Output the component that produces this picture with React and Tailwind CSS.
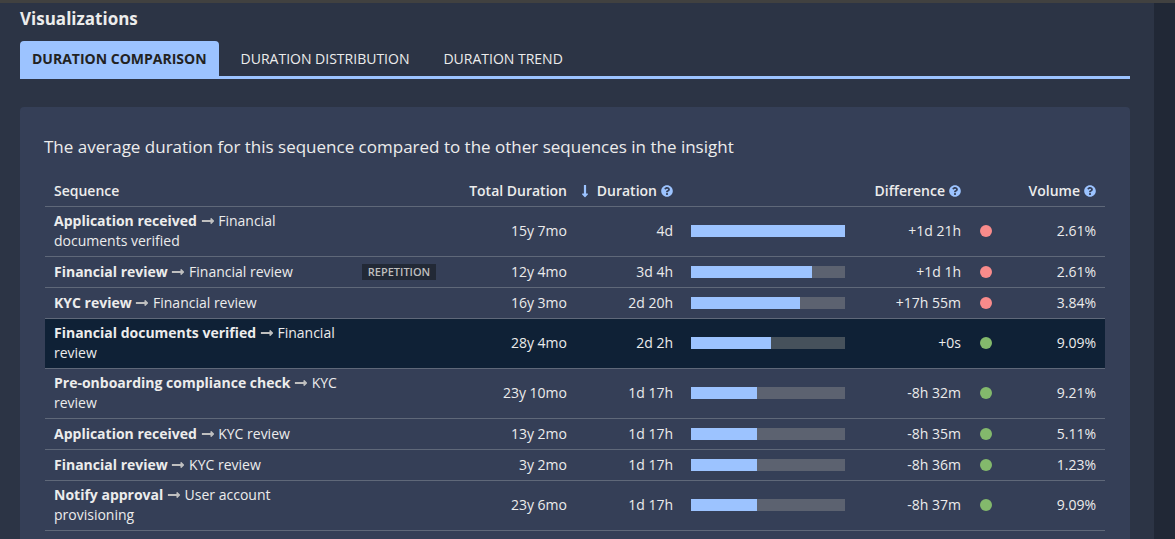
import { FaLongArrowAltDown, FaLongArrowAltRight, FaQuestionCircle } from "react-icons/fa";

const tabs = ["Duration comparison", "Duration distribution", "Duration trend"];

const rows = [
  { from: "Application received", to: "Financial documents verified", total: "15y 7mo", duration: "4d", share: 100, diff: "+1d 21h", slower: true, volume: "2.61%" },
  { from: "Financial review", to: "Financial review", repetition: true, total: "12y 4mo", duration: "3d 4h", share: 78.6, diff: "+1d 1h", slower: true, volume: "2.61%" },
  { from: "KYC review", to: "Financial review", total: "16y 3mo", duration: "2d 20h", share: 70.8, diff: "+17h 55m", slower: true, volume: "3.84%" },
  { from: "Financial documents verified", to: "Financial review", current: true, total: "28y 4mo", duration: "2d 2h", share: 52, diff: "+0s", volume: "9.09%" },
  { from: "Pre-onboarding compliance check", to: "KYC review", total: "23y 10mo", duration: "1d 17h", share: 43, diff: "-8h 32m", volume: "9.21%" },
  { from: "Application received", to: "KYC review", total: "13y 2mo", duration: "1d 17h", share: 43, diff: "-8h 35m", volume: "5.11%" },
  { from: "Financial review", to: "KYC review", total: "3y 2mo", duration: "1d 17h", share: 43, diff: "-8h 36m", volume: "1.23%" },
  { from: "Notify approval", to: "User account provisioning", total: "23y 6mo", duration: "1d 17h", share: 43, diff: "-8h 37m", volume: "9.09%" },
];

function Help({ topic }) {
  return (
    <button type="button" aria-label={`About ${topic}`} className="text-[#9cc3ff]">
      <FaQuestionCircle className="size-3" />
    </button>
  );
}

function Tabs() {
  return (
    <div role="tablist" className="flex gap-2.5 border-b-3 border-[#9cc3ff]">
      {tabs.map((tab, i) => (
        <button
          key={tab}
          type="button"
          role="tab"
          aria-selected={i === 0}
          className={`h-[35px] rounded-t px-3 text-sm uppercase ${
            i === 0 ? "bg-[#9cc3ff] font-bold text-[#222222]" : "text-[#ececec]"
          }`}
        >
          {tab}
        </button>
      ))}
    </div>
  );
}

function Row({ row }) {
  const cell = "h-[31px] px-[9px] pt-1 pb-[5px]";
  return (
    <tr className={`border-b border-[#5f6879] ${row.current ? "bg-[#0f2136]" : ""}`}>
      <td className={cell}>
        <strong className="font-bold">{row.from}</strong>{" "}
        <FaLongArrowAltRight className="inline size-3.5 align-[-2px] text-[#bfbfbf]" />{" "}
        {row.to}
      </td>
      <td className={`${cell} text-right`}>
        {row.repetition && (
          <span className="block bg-[#222936] text-center text-[11px] leading-4 font-semibold text-[#bfbfbf]">
            REPETITION
          </span>
        )}
      </td>
      <td className={`${cell} text-right`}>{row.total}</td>
      <td className={`${cell} text-right`}>{row.duration}</td>
      <td className={cell}>
        <div className={`h-3 ${row.current ? "bg-[#46515b]" : "bg-[#5c6270]"}`}>
          <div className="h-full bg-[#9cc3ff]" style={{ width: `${row.share}%` }} />
        </div>
      </td>
      <td className={`${cell} text-right`}>{row.diff}</td>
      <td className={cell}>
        <div className={`mx-auto size-3 rounded-full ${row.slower ? "bg-[#f98b8b]" : "bg-[#83b96c]"}`} />
      </td>
      <td className={`${cell} text-right`}>{row.volume}</td>
    </tr>
  );
}

function ComparisonTable() {
  const head = "px-[9px] pt-1.5 pb-[5px] font-semibold";
  return (
    <table className="w-full table-fixed border-collapse text-sm leading-5">
      <colgroup>
        <col />
        <col className="w-[92px]" />
        <col className="w-[131px]" />
        <col className="w-[106px]" />
        <col className="w-[172px]" />
        <col className="w-[116px]" />
        <col className="w-8" />
        <col className="w-[103px]" />
      </colgroup>
      <thead>
        <tr className="border-b border-[#5f6879]">
          <th scope="col" className={`${head} text-left`}>Sequence</th>
          <td />
          <th scope="col" className={`${head} text-right whitespace-nowrap`}>Total Duration</th>
          <th scope="col" aria-sort="descending" className={`${head} pl-0`}>
            <div className="flex items-center justify-end gap-1">
              <FaLongArrowAltDown className="mr-1 h-3.5 w-2 text-[#9cc3ff]" />
              Duration
              <Help topic="duration" />
            </div>
          </th>
          <td />
          <th scope="col" className={head}>
            <div className="flex items-center justify-end gap-1">
              Difference
              <Help topic="difference" />
            </div>
          </th>
          <td />
          <th scope="col" className={head}>
            <div className="flex items-center justify-end gap-1">
              Volume
              <Help topic="volume" />
            </div>
          </th>
        </tr>
      </thead>
      <tbody>
        {rows.map((row) => (
          <Row key={row.from + row.to} row={row} />
        ))}
      </tbody>
    </table>
  );
}

export default function App() {
  return (
    <div className="flex h-screen overflow-hidden border-t-3 border-[#414140] bg-[#2c3445] font-['Open_Sans',sans-serif] text-[#ececec]">
      <main className="flex min-w-0 flex-1 flex-col pt-1 pr-6 pl-5">
        <h2 className="mb-2.5 text-[17px] leading-6 font-bold">Visualizations</h2>
        <Tabs />
        <section className="mt-7 flex-1 rounded-t bg-[#353f57] px-6 pt-7">
          <h3 className="text-[17px] leading-6">
            The average duration for this sequence compared to the other sequences in the insight
          </h3>
          <div className="mx-px mt-4">
            <ComparisonTable />
          </div>
        </section>
      </main>
      <div className="w-[21px] bg-[#212836]" />
    </div>
  );
}
